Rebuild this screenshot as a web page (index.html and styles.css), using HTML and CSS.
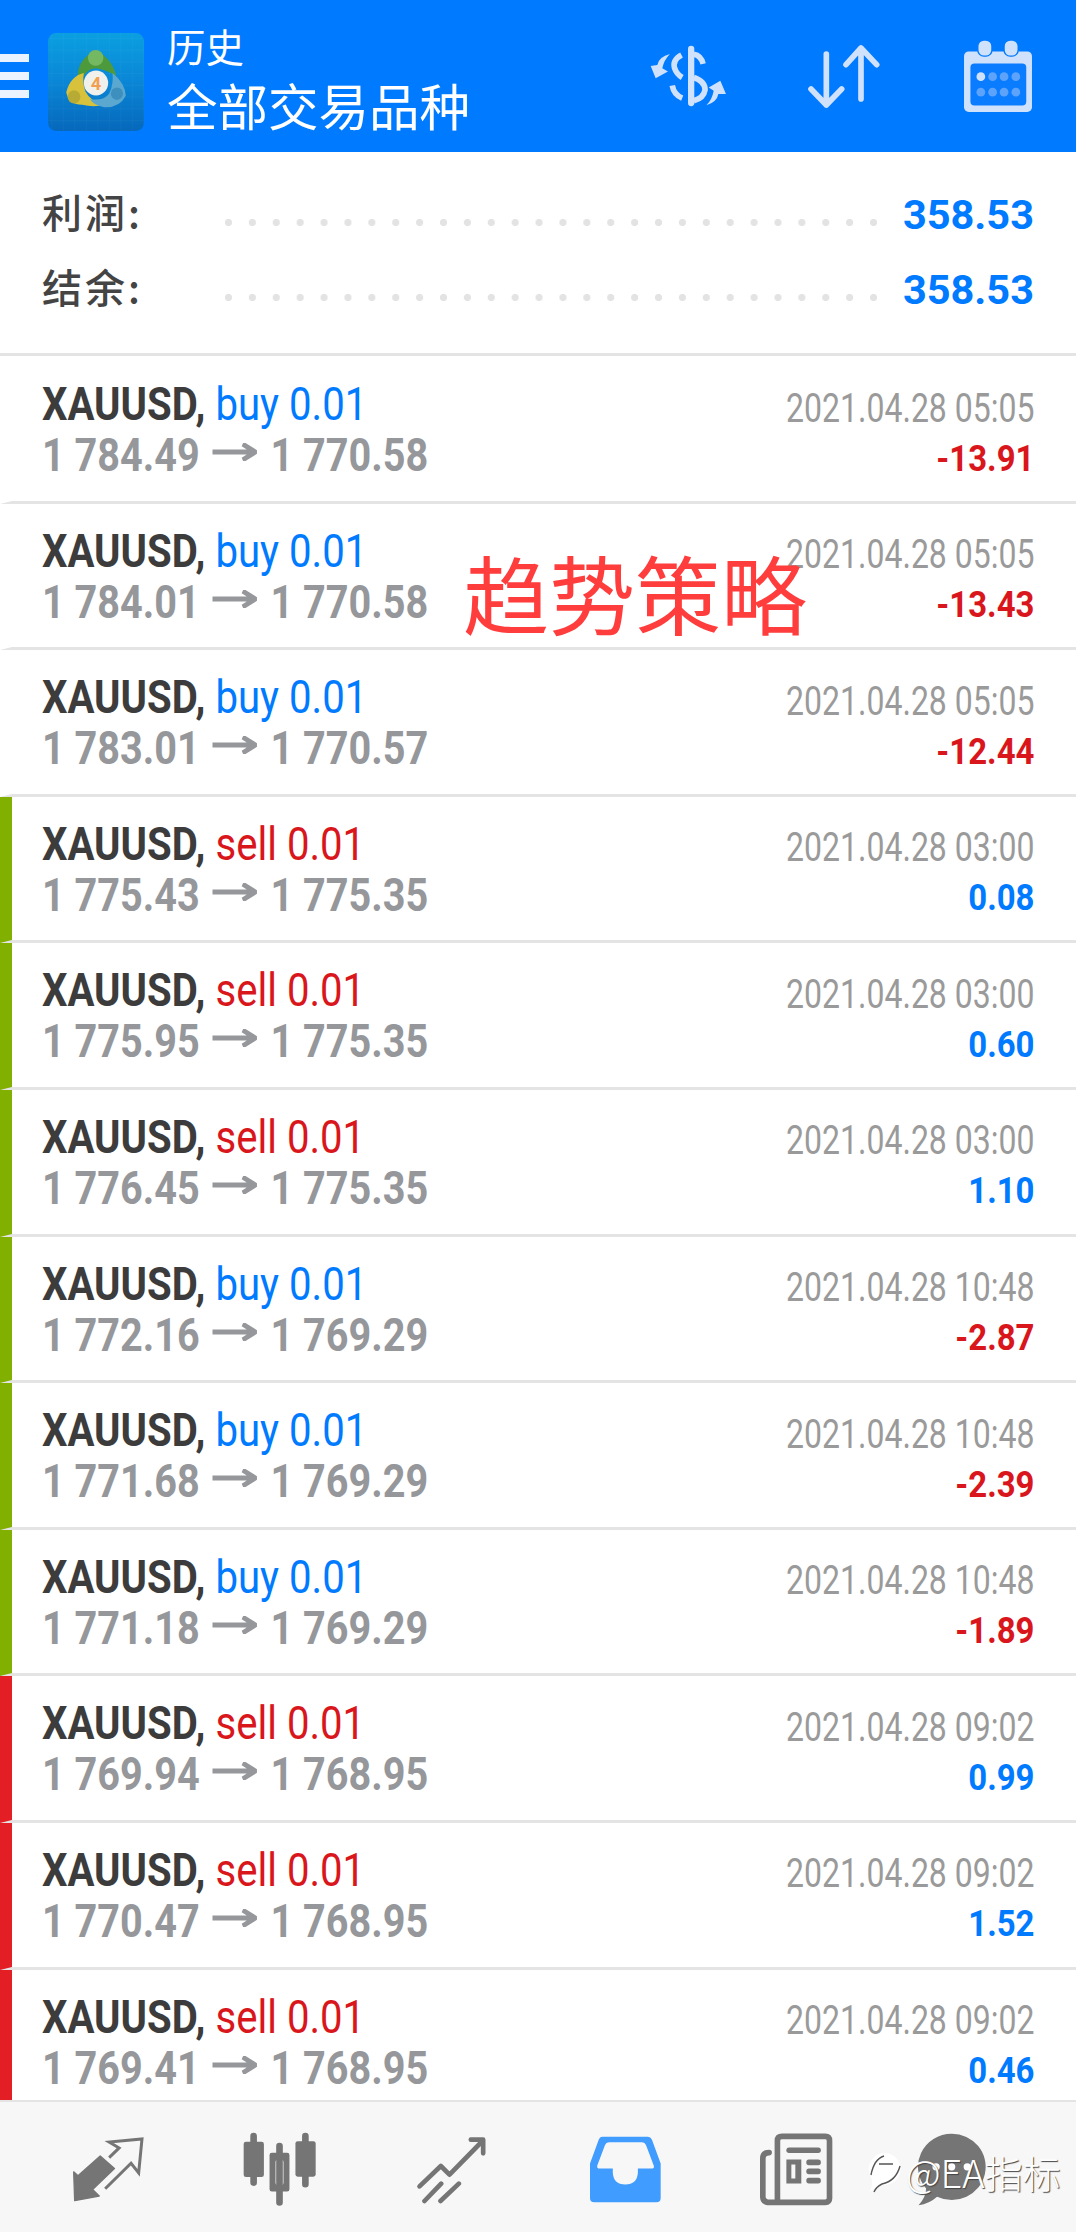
FILE: index.html
```html
<!DOCTYPE html>
<html lang="zh-CN">
<head>
  <meta charset="UTF-8">
  <meta name="viewport" content="width=device-width, initial-scale=1.0">
  <title>历史</title>
  <link rel="stylesheet" href="styles.css">
</head>
<body>

  <!-- Top bar -->
  <header class="topbar">
    <div class="burger"><i></i><i></i><i></i></div>
    <svg class="logo" viewBox="24 20 284 284" preserveAspectRatio="none">
      <defs>
        <linearGradient id="logoBg" x1="0" y1="0" x2="0" y2="1">
          <stop offset="0" stop-color="#0a9fe0"/>
          <stop offset="0.5" stop-color="#0a86d6"/>
          <stop offset="1" stop-color="#0668bb"/>
        </linearGradient>
        <pattern id="logoGrid" width="34" height="34" patternUnits="userSpaceOnUse">
          <path d="M0 0H34M0 0V34" fill="none" stroke="#fff" stroke-opacity="0.08" stroke-width="2"/>
        </pattern>
      </defs>
      <rect x="24" y="20" width="284" height="284" rx="24" fill="url(#logoBg)"/>
      <rect x="24" y="20" width="284" height="284" rx="24" fill="url(#logoGrid)"/>
      <path d="M112 140Q115 95 165 70Q215 95 226 145Q195 125 165 122Q135 124 122 160Z" fill="#4d9a3c"/>
      <circle cx="165" cy="92" r="23" fill="#74b862"/>
      <path d="M130 136Q90 145 78 192Q85 228 125 228Q160 236 190 228Q150 218 135 190Q125 165 130 136Z" fill="#d8c23c"/>
      <circle cx="101" cy="205" r="19" fill="#b8ab35"/>
      <path d="M215 136Q252 165 254 202Q235 238 190 235Q160 230 148 212Q190 217 205 195Q218 170 215 136Z" fill="#5aa8d0"/>
      <circle cx="228" cy="196" r="18" fill="#3d8fbe"/>
      <circle cx="166" cy="165" r="36" fill="#f0f0ec"/>
      <text class="logo-four" x="166" y="184">4</text>
    </svg>
    <div class="topbar-title">
      <div class="title-small">历史</div>
      <div class="title-big">全部交易品种</div>
    </div>
    <div class="topbar-icons">
      <svg class="icon-dollar" viewBox="315 140 235 190">
        <path d="M378 167Q345 175 340 200L320 203L335 240L372 220L355 210Q360 185 378 167Z" fill="#d0e2fb"/>
        <path d="M488 322Q520 312 524 288L547 288L530 248L495 268L510 278Q505 305 488 322Z" fill="#d0e2fb"/>
        <g fill="none" stroke="#d0e2fb" stroke-width="17">
          <path d="M442 152V315" stroke-width="19" stroke-linecap="round"/>
          <path d="M478 197Q472 172 450 168"/>
          <path d="M450 238Q484 250 484 275Q480 300 450 308"/>
          <path d="M413 170Q385 185 392 210Q398 228 415 238"/>
          <path d="M385 262Q390 290 415 300"/>
        </g>
      </svg>
      <svg class="icon-sort" viewBox="778 140 222 195">
        <g fill="none" stroke="#d0e2fb" stroke-width="17" stroke-linecap="round" stroke-linejoin="round">
          <path d="M836 170V323M790 275L836 323L882 275"/>
          <path d="M940 305V152M895 202L940 152L987 202"/>
        </g>
      </svg>
      <svg class="icon-cal" viewBox="1243 128 202 214">
        <rect x="1243" y="162" width="202" height="180" rx="14" fill="#d0e2fb"/>
        <rect x="1262" y="198" width="166" height="125" rx="12" fill="#0a7cff"/>
        <rect x="1284" y="128" width="42" height="48" rx="18" fill="#d0e2fb" stroke="#007aff" stroke-width="4"/>
        <rect x="1362" y="128" width="42" height="48" rx="18" fill="#d0e2fb" stroke="#007aff" stroke-width="4"/>
        <circle cx="1293" cy="237" r="13" fill="#d0e2fb"/>
        <circle cx="1328" cy="237" r="13" fill="#5ea3fb"/>
        <circle cx="1362" cy="237" r="13" fill="#5ea3fb"/>
        <circle cx="1397" cy="237" r="13" fill="#5ea3fb"/>
        <circle cx="1293" cy="283" r="13" fill="#5ea3fb"/>
        <circle cx="1328" cy="283" r="13" fill="#5ea3fb"/>
        <circle cx="1362" cy="283" r="13" fill="#5ea3fb"/>
        <circle cx="1397" cy="283" r="13" fill="#5ea3fb"/>
      </svg>
    </div>
  </header>

  <!-- Totals -->
  <section class="summary">
    <div class="summary-row">
      <span class="summary-label">利润:</span>
      <span class="summary-dots"></span>
      <span class="summary-value">358.53</span>
    </div>
    <div class="summary-row">
      <span class="summary-label">结余:</span>
      <span class="summary-dots"></span>
      <span class="summary-value">358.53</span>
    </div>
  </section>

  <!-- Deals -->
  <main class="deals">
    <div class="row">
      <div class="row-left">
        <div class="row-title"><b>XAUUSD,</b> <span class="buy">buy 0.01</span></div>
        <div class="row-prices">1 784.49<svg class="arrow" viewBox="0 0 53 18" preserveAspectRatio="none"><path d="M0 9H50M36 1L51 9L36 17"/></svg>1 770.58</div>
      </div>
      <div class="row-right">
        <div class="row-date">2021.04.28 05:05</div>
        <div class="row-profit loss">-13.91</div>
      </div>
    </div>
    <div class="row">
      <div class="row-left">
        <div class="row-title"><b>XAUUSD,</b> <span class="buy">buy 0.01</span></div>
        <div class="row-prices">1 784.01<svg class="arrow" viewBox="0 0 53 18" preserveAspectRatio="none"><path d="M0 9H50M36 1L51 9L36 17"/></svg>1 770.58</div>
      </div>
      <div class="row-right">
        <div class="row-date">2021.04.28 05:05</div>
        <div class="row-profit loss">-13.43</div>
      </div>
    </div>
    <div class="row">
      <div class="row-left">
        <div class="row-title"><b>XAUUSD,</b> <span class="buy">buy 0.01</span></div>
        <div class="row-prices">1 783.01<svg class="arrow" viewBox="0 0 53 18" preserveAspectRatio="none"><path d="M0 9H50M36 1L51 9L36 17"/></svg>1 770.57</div>
      </div>
      <div class="row-right">
        <div class="row-date">2021.04.28 05:05</div>
        <div class="row-profit loss">-12.44</div>
      </div>
    </div>
    <div class="row mark-green">
      <div class="row-left">
        <div class="row-title"><b>XAUUSD,</b> <span class="sell">sell 0.01</span></div>
        <div class="row-prices">1 775.43<svg class="arrow" viewBox="0 0 53 18" preserveAspectRatio="none"><path d="M0 9H50M36 1L51 9L36 17"/></svg>1 775.35</div>
      </div>
      <div class="row-right">
        <div class="row-date">2021.04.28 03:00</div>
        <div class="row-profit gain">0.08</div>
      </div>
    </div>
    <div class="row mark-green">
      <div class="row-left">
        <div class="row-title"><b>XAUUSD,</b> <span class="sell">sell 0.01</span></div>
        <div class="row-prices">1 775.95<svg class="arrow" viewBox="0 0 53 18" preserveAspectRatio="none"><path d="M0 9H50M36 1L51 9L36 17"/></svg>1 775.35</div>
      </div>
      <div class="row-right">
        <div class="row-date">2021.04.28 03:00</div>
        <div class="row-profit gain">0.60</div>
      </div>
    </div>
    <div class="row mark-green">
      <div class="row-left">
        <div class="row-title"><b>XAUUSD,</b> <span class="sell">sell 0.01</span></div>
        <div class="row-prices">1 776.45<svg class="arrow" viewBox="0 0 53 18" preserveAspectRatio="none"><path d="M0 9H50M36 1L51 9L36 17"/></svg>1 775.35</div>
      </div>
      <div class="row-right">
        <div class="row-date">2021.04.28 03:00</div>
        <div class="row-profit gain">1.10</div>
      </div>
    </div>
    <div class="row mark-green">
      <div class="row-left">
        <div class="row-title"><b>XAUUSD,</b> <span class="buy">buy 0.01</span></div>
        <div class="row-prices">1 772.16<svg class="arrow" viewBox="0 0 53 18" preserveAspectRatio="none"><path d="M0 9H50M36 1L51 9L36 17"/></svg>1 769.29</div>
      </div>
      <div class="row-right">
        <div class="row-date">2021.04.28 10:48</div>
        <div class="row-profit loss">-2.87</div>
      </div>
    </div>
    <div class="row mark-green">
      <div class="row-left">
        <div class="row-title"><b>XAUUSD,</b> <span class="buy">buy 0.01</span></div>
        <div class="row-prices">1 771.68<svg class="arrow" viewBox="0 0 53 18" preserveAspectRatio="none"><path d="M0 9H50M36 1L51 9L36 17"/></svg>1 769.29</div>
      </div>
      <div class="row-right">
        <div class="row-date">2021.04.28 10:48</div>
        <div class="row-profit loss">-2.39</div>
      </div>
    </div>
    <div class="row mark-green">
      <div class="row-left">
        <div class="row-title"><b>XAUUSD,</b> <span class="buy">buy 0.01</span></div>
        <div class="row-prices">1 771.18<svg class="arrow" viewBox="0 0 53 18" preserveAspectRatio="none"><path d="M0 9H50M36 1L51 9L36 17"/></svg>1 769.29</div>
      </div>
      <div class="row-right">
        <div class="row-date">2021.04.28 10:48</div>
        <div class="row-profit loss">-1.89</div>
      </div>
    </div>
    <div class="row mark-red">
      <div class="row-left">
        <div class="row-title"><b>XAUUSD,</b> <span class="sell">sell 0.01</span></div>
        <div class="row-prices">1 769.94<svg class="arrow" viewBox="0 0 53 18" preserveAspectRatio="none"><path d="M0 9H50M36 1L51 9L36 17"/></svg>1 768.95</div>
      </div>
      <div class="row-right">
        <div class="row-date">2021.04.28 09:02</div>
        <div class="row-profit gain">0.99</div>
      </div>
    </div>
    <div class="row mark-red">
      <div class="row-left">
        <div class="row-title"><b>XAUUSD,</b> <span class="sell">sell 0.01</span></div>
        <div class="row-prices">1 770.47<svg class="arrow" viewBox="0 0 53 18" preserveAspectRatio="none"><path d="M0 9H50M36 1L51 9L36 17"/></svg>1 768.95</div>
      </div>
      <div class="row-right">
        <div class="row-date">2021.04.28 09:02</div>
        <div class="row-profit gain">1.52</div>
      </div>
    </div>
    <div class="row mark-red">
      <div class="row-left">
        <div class="row-title"><b>XAUUSD,</b> <span class="sell">sell 0.01</span></div>
        <div class="row-prices">1 769.41<svg class="arrow" viewBox="0 0 53 18" preserveAspectRatio="none"><path d="M0 9H50M36 1L51 9L36 17"/></svg>1 768.95</div>
      </div>
      <div class="row-right">
        <div class="row-date">2021.04.28 09:02</div>
        <div class="row-profit gain">0.46</div>
      </div>
    </div>
  </main>

  <!-- Bottom tabs -->
  <nav class="tabbar">
    <svg class="tab tab-quotes" viewBox="210 180 220 196">
      <path d="M215 285L228 297L295 237L338 275L272 338L292 358L218 372Z" fill="#757575" stroke="#757575" stroke-width="4" stroke-linejoin="round"/>
      <path d="M322 242L352 213L322 195L421 186L411 288L388 259L310 336" fill="none" stroke="#757575" stroke-width="9"/>
    </svg>
    <svg class="tab tab-chart" viewBox="705 163 220 225">
      <g fill="none" stroke="#757575" stroke-width="20" stroke-linecap="round">
        <path d="M737 175V315M815 205V375M893 175V320"/>
      </g>
      <rect x="707" y="192" width="61" height="106" rx="7" fill="#757575"/>
      <path fill-rule="evenodd" d="M792 225H838Q845 225 845 232V335Q845 342 838 342H792Q785 342 785 335V232Q785 225 792 225ZM810 245Q803 245 803 252V316Q803 323 810 323H820Q827 323 827 316V252Q827 245 820 245Z" fill="#757575"/>
      <rect x="863" y="190" width="61" height="107" rx="7" fill="#757575"/>
    </svg>
    <svg class="tab tab-trade" viewBox="1208 170 212 204">
      <g fill="none" stroke="#757575" stroke-width="14" stroke-linecap="round" stroke-linejoin="round">
        <path d="M1218 321L1282 260L1308 286L1404 188"/>
        <path d="M1372 181H1409V222"/>
        <path d="M1233 365L1283 313M1281 365L1336 313"/>
      </g>
    </svg>
    <svg class="tab tab-history" viewBox="142 173 212 200">
      <path fill-rule="evenodd" d="M178 175H315Q323 175 327 184L353 255V358Q353 371 340 371H155Q142 371 142 358V255L168 184Q171 175 178 175ZM200 192Q190 192 186 202L164 260Q161 270 171 270H210V282Q212 318 247 318Q283 318 285 282V270H325Q336 270 332 260L310 202Q306 192 296 192Z" fill="#409cff"/>
    </svg>
    <svg class="tab tab-news" viewBox="643 163 222 220">
      <g fill="none" stroke="#757575" stroke-width="17" stroke-linejoin="round" stroke-linecap="round">
        <path d="M673 222Q654 222 654 240V355Q654 372 675 372H842Q855 372 855 360V186Q855 173 842 173H712Q698 173 698 186V365"/>
      </g>
      <rect x="725" y="207" width="104" height="16" rx="8" fill="#757575"/>
      <path fill-rule="evenodd" d="M725 243H770V315H725ZM740 258V300H752V258Z" fill="#757575"/>
      <rect x="785" y="243" width="44" height="17" rx="8" fill="#757575"/>
      <rect x="785" y="270" width="44" height="17" rx="8" fill="#757575"/>
      <rect x="785" y="298" width="44" height="17" rx="8" fill="#757575"/>
    </svg>
    <svg class="tab tab-chat" viewBox="1108 163 210 220">
      <path d="M1212 165A102 100 0 1 1 1168 355Q1145 376 1112 381Q1135 355 1135 330A102 100 0 0 1 1212 165Z" fill="#757575"/>
      <circle cx="1165" cy="265" r="11" fill="#fff"/>
      <circle cx="1212" cy="265" r="11" fill="#fff"/>
      <circle cx="1259" cy="265" r="11" fill="#fff"/>
    </svg>
  </nav>

  <!-- Things pasted over the screenshot -->
  <div class="stamp">趋势策略</div>
  <div class="credit">
    <svg class="credit-logo" viewBox="0 0 36 42">
      <path d="M19 2A16 16 0 1 1 13 33Q8 39 3 41Q8 35 5 26A16 16 0 0 1 19 2Z" fill="#fff"/>
      <path d="M5 24Q8 8 18 5M13 13H27M34 15Q30 30 16 33Q10 36 8 41" fill="none" stroke="#555" stroke-width="1.4"/>
    </svg>
    <span class="credit-text">@EA指标</span>
  </div>

</body>
</html>
```

FILE: styles.css
```css
* {
  box-sizing: border-box;
}
html, body {
  margin: 0;
  padding: 0;
}
body {
  width: 1076px;
  height: 2232px;
  overflow: hidden;
  position: relative;
  display: flex;
  flex-direction: column;
  background-color: #fff;
  font-family: Roboto, "Noto Sans CJK SC", sans-serif;
}

/* top bar */
.topbar {
  height: 152px;
  flex: none;
  display: flex;
  align-items: center;
  background-color: #007aff;
  color: #fff;
}
.burger {
  width: 29px;
  margin-right: 19px;
  display: flex;
  flex-direction: column;
  gap: 10px;
}
.burger i {
  display: block;
  height: 8px;
  background-color: #eaf3ff;
}
.logo {
  width: 96px;
  height: 98px;
  margin-top: 12px;
}
.logo-four {
  font-family: Roboto, sans-serif;
  font-size: 54px;
  font-weight: 700;
  fill: #f0a050;
  text-anchor: middle;
}
.topbar-title {
  margin-left: 23px;
  padding-top: 5px;
  font-family: "Noto Sans CJK SC", sans-serif;
}
.title-small {
  font-size: 38.5px;
  line-height: 44px;
}
.title-big {
  font-size: 50.5px;
  line-height: 60px;
  margin-top: 7px;
}
.topbar-icons {
  margin-left: auto;
  margin-right: 44px;
  display: flex;
  align-items: center;
}
.icon-dollar {
  width: 78px;
  height: 63px;
}
.icon-sort {
  width: 74px;
  height: 65px;
  margin-left: 80px;
}
.icon-cal {
  width: 68px;
  height: 72px;
  margin-left: 83px;
}

/* totals */
.summary {
  height: 204px;
  flex: none;
  padding-top: 25px;
  border-bottom: 3px solid #e4e4e4;
}
.summary-row {
  height: 75px;
  padding: 0 42px;
  display: flex;
  align-items: center;
}
.summary-label {
  width: 183px;
  flex: none;
  padding-bottom: 8px;
  font-family: "Noto Sans CJK SC", sans-serif;
  font-size: 40px;
  font-weight: 500;
  letter-spacing: 3px;
  color: #444;
}
.summary-dots {
  flex: 1;
  height: 7px;
  margin: 16px 24px 0 0;
  background-image: radial-gradient(circle at 3.5px 3.5px, #e3e3e3 3.4px, transparent 3.8px);
  background-size: 23.9px 7px;
  background-repeat: repeat-x;
}
.summary-value {
  font-size: 41.5px;
  font-weight: 700;
  color: #007aff;
}

/* deal rows */
.deals {
  flex: 1;
  padding-top: 1px;
  overflow: hidden;
}
.row {
  height: 146.6px;
  padding: 21px 42px 0 30px;
  display: flex;
  justify-content: space-between;
  border-left: 12px solid transparent;
  border-bottom: 3px solid #e4e4e4;
}
.mark-green {
  border-left-color: #82b000;
}
.mark-red {
  border-left-color: #e31e24;
}
.row-left {
  white-space: nowrap;
}
.row-title {
  font-size: 47px;
  line-height: 51px;
  transform: scaleX(0.854);
  transform-origin: left center;
}
.row-title b {
  color: #3c3c3c;
}
.buy {
  color: #007aff;
}
.sell {
  color: #d9161c;
}
.row-prices {
  font-size: 47px;
  font-weight: 700;
  line-height: 51px;
  color: #95979b;
  transform: scaleX(0.843);
  transform-origin: left center;
}
.arrow {
  width: 53px;
  height: 18px;
  margin: 0 16px 0 15px;
  vertical-align: 10px;
}
.arrow path {
  fill: none;
  stroke: #95979b;
  stroke-width: 5;
}
.row-right {
  padding-top: 5.5px;
  text-align: right;
  white-space: nowrap;
}
.row-date {
  font-size: 40px;
  line-height: 50px;
  color: #9a9a9a;
  transform: scaleX(0.8);
  transform-origin: right center;
}
.row-profit {
  font-size: 37px;
  font-weight: 700;
  line-height: 50px;
  transform: scaleX(0.89);
  transform-origin: right center;
}
.loss {
  color: #d9161c;
}
.gain {
  color: #007aff;
}

/* bottom tabs */
.tabbar {
  height: 132px;
  flex: none;
  display: flex;
  align-items: center;
  padding: 5px 0 0 72px;
  background-color: #f7f7f7;
  border-top: 2px solid #e4e4e4;
}
.tab {
  flex: none;
}
.tab-quotes {
  width: 73px;
  height: 65px;
}
.tab-chart {
  width: 73px;
  height: 75px;
  margin-left: 98px;
}
.tab-trade {
  width: 71px;
  height: 68px;
  margin-left: 100px;
}
.tab-history {
  width: 71px;
  height: 67px;
  margin-left: 103px;
}
.tab-news {
  width: 74px;
  height: 73px;
  margin-left: 98px;
}
.tab-chat {
  width: 70px;
  height: 73px;
  margin-left: 84px;
}

/* overlays */
.stamp {
  position: absolute;
  left: 463px;
  top: 532px;
  font-family: "Noto Sans CJK SC", sans-serif;
  font-size: 86px;
  line-height: 120px;
  color: #ff3d3d;
  white-space: nowrap;
}
.credit {
  position: absolute;
  left: 866px;
  top: 2150px;
  display: flex;
  align-items: center;
  gap: 4px;
}
.credit-logo {
  width: 36px;
  height: 42px;
}
.credit-text {
  font-family: "Noto Sans CJK SC", sans-serif;
  font-size: 38px;
  font-weight: 300;
  line-height: 44px;
  color: #fff;
  text-shadow: 1px 1px 1px #444;
  white-space: nowrap;
}
```
